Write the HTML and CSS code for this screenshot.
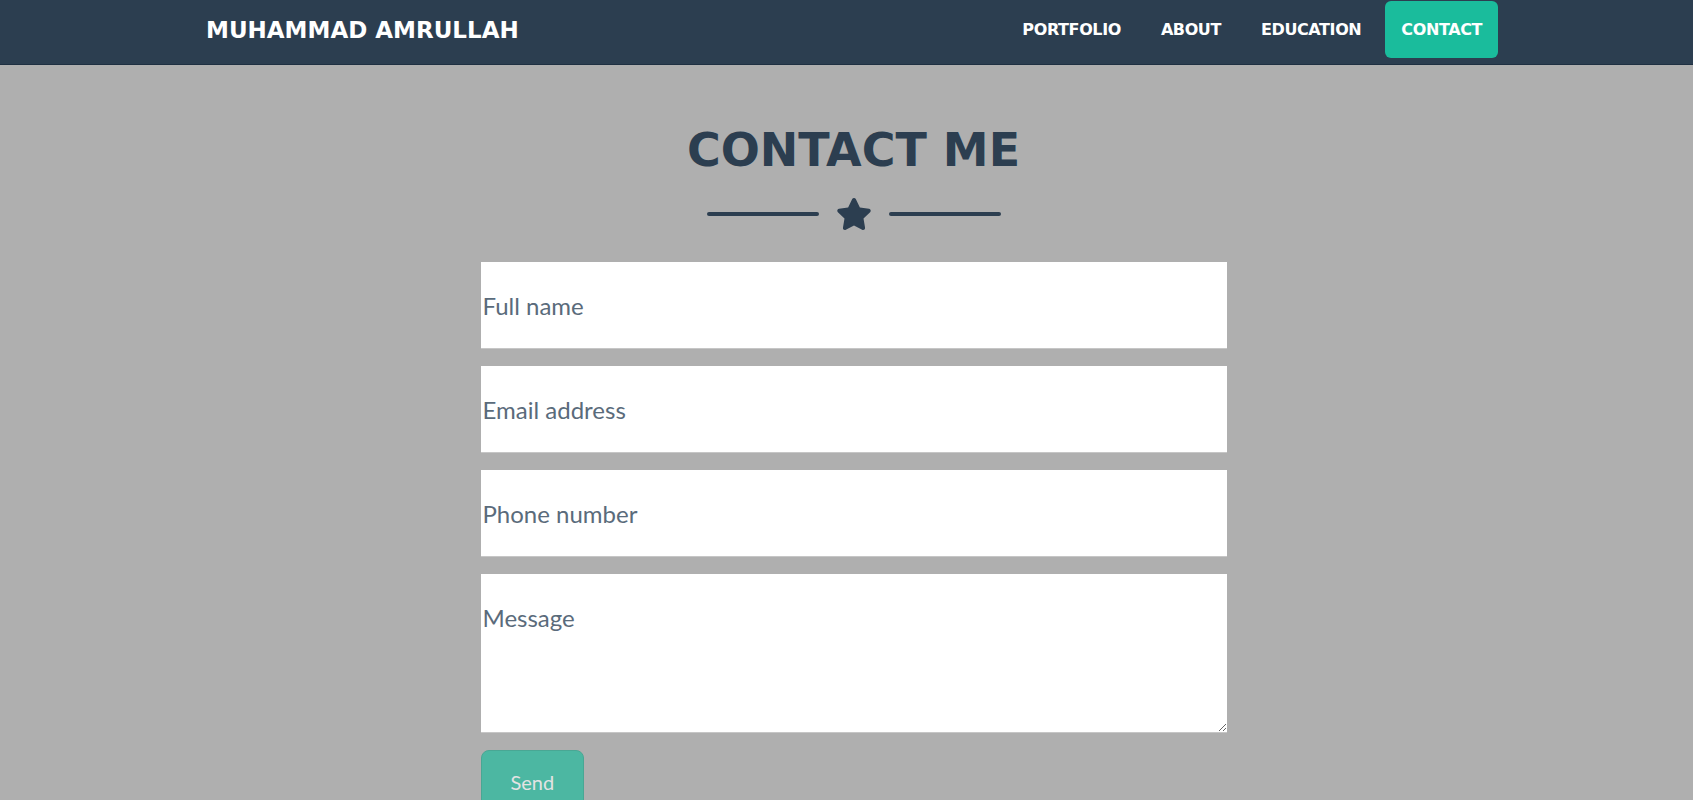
FILE: index.html
```html
<!DOCTYPE html>
<html lang="en">
<head>
<meta charset="utf-8">
<title>Muhammad Amrullah - Contact</title>
<link rel="stylesheet" href="styles.css">
</head>
<body>
<nav class="navbar">
  <a class="brand" href="#">MUHAMMAD AMRULLAH</a>
  <ul class="nav-links">
    <li><a class="nav-link" href="#">PORTFOLIO</a></li>
    <li><a class="nav-link" href="#">ABOUT</a></li>
    <li><a class="nav-link" href="#">EDUCATION</a></li>
    <li><a class="nav-link active" href="#">CONTACT</a></li>
  </ul>
</nav>
<main class="contact">
  <div class="contact-inner">
    <h2 class="section-title">CONTACT ME</h2>
    <div class="divider">
      <span class="divider-line"></span>
      <svg class="divider-star" viewBox="0 0 576 512" width="36" height="32" aria-hidden="true"><path fill="#2c3e50" d="M259.3 17.8L194 150.2 47.9 171.5c-26.2 3.8-36.7 36.1-17.7 54.6l105.7 103-25 145.5c-4.5 26.3 23.2 46 46.4 33.7L288 439.6l130.7 68.7c23.2 12.2 50.9-7.4 46.4-33.7l-25-145.5 105.7-103c19-18.5 8.5-50.8-17.7-54.6L382 150.2 316.7 17.8c-11.7-23.6-45.6-23.9-57.4 0z"/></svg>
      <span class="divider-line"></span>
    </div>
    <form class="contact-form">
      <input class="field" type="text" placeholder="Full name">
      <input class="field" type="email" placeholder="Email address">
      <input class="field" type="tel" placeholder="Phone number">
      <textarea class="field field-message" placeholder="Message"></textarea>
      <div class="actions">
        <button class="btn-send" type="button" disabled>Send</button>
      </div>
    </form>
  </div>
</main>
</body>
</html>
```

FILE: styles.css
```css
* { box-sizing: border-box; }

html, body {
  margin: 0;
  padding: 0;
  height: 100%;
  overflow: hidden;
}

body {
  background: #afafaf;
  font-family: "Lato", "Liberation Sans", sans-serif;
  color: #2c3e50;
}

.navbar {
  display: flex;
  justify-content: space-between;
  align-items: center;
  height: 65px;
  padding: 0 195px 8px 206px;
  background: #2c3e50;
  border-bottom: 1px solid #1f3042;
}

.brand {
  font-family: "DejaVu Sans", "Liberation Sans", sans-serif;
  font-weight: 700;
  font-size: 23px;
  color: #fff;
  text-decoration: none;
  margin-top: 3px;
}

.nav-links {
  display: flex;
  align-items: center;
  gap: 8px;
  list-style: none;
  margin: 0;
  padding: 0;
  height: 57px;
  margin-top: 2px;
}

.nav-links li { height: 100%; }

.nav-link {
  display: flex;
  align-items: center;
  height: 100%;
  padding: 0 16px;
  font-family: "DejaVu Sans", "Liberation Sans", sans-serif;
  font-weight: 700;
  font-size: 16px;
  letter-spacing: -0.4px;
  color: #fff;
  text-decoration: none;
  border-radius: 6px;
}

.nav-link.active {
  background: #1abc9c;
}

.contact {
  padding: 62px 0 0 14px;
}

.contact-inner {
  display: flex;
  flex-direction: column;
  align-items: center;
}

.section-title {
  margin: 0;
  font-family: "DejaVu Sans", "Liberation Sans", sans-serif;
  font-weight: 700;
  font-size: 46px;
  line-height: 1;
  color: #2c3e50;
}

.divider {
  display: flex;
  align-items: center;
  gap: 17px;
  margin-top: 25px;
  height: 32px;
}

.divider-line {
  display: block;
  width: 112px;
  height: 4px;
  border-radius: 2px;
  background: #2c3e50;
}

.divider-star { display: block; }

.contact-form {
  display: flex;
  flex-direction: column;
  gap: 17px;
  width: 746px;
  margin-top: 32px;
}

.field {
  display: block;
  width: 100%;
  height: 87px;
  margin: 0;
  padding: 0 2px;
  border: none;
  border-bottom: 1px solid #c6c6c6;
  border-radius: 0;
  background: #fff;
  font-family: "Lato", "Liberation Sans", sans-serif;
  font-size: 24px;
  color: #2c3e50;
  outline: none;
}

.field::placeholder {
  color: #5a6b7b;
  opacity: 1;
}

.field-message {
  height: 159px;
  padding-top: 29px;
  line-height: normal;
  resize: vertical;
}

.actions { display: flex; }

.btn-send {
  font-family: "Lato", "Liberation Sans", sans-serif;
  font-size: 20px;
  line-height: 1.5;
  padding: 16px 29px;
  border: 1px solid #14a386;
  border-radius: 8px;
  background: #18bc9c;
  color: #fff;
  opacity: 0.65;
}
```
